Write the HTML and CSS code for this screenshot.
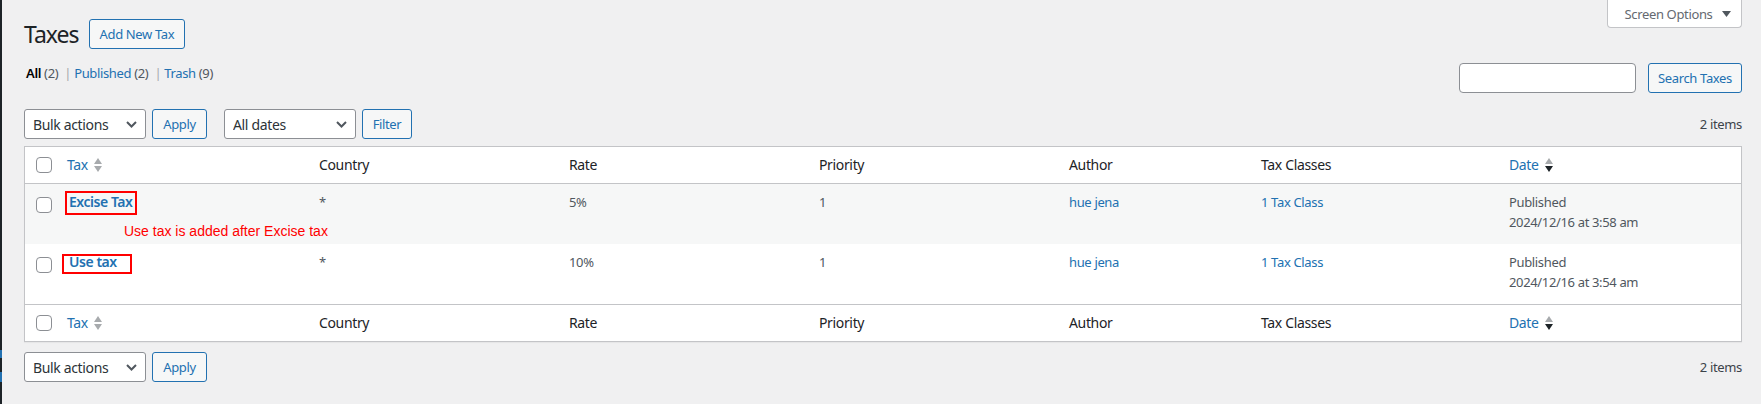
FILE: index.html
```html
<!DOCTYPE html>
<html lang="en">
<head>
  <meta charset="UTF-8" />
  <meta name="viewport" content="width=device-width, initial-scale=1.0"/>
  <title>Taxes</title>
  <link rel="stylesheet" href="styles.css">
</head>
<body>
  <div class="admin">
    <div class="menu-edge">
      <span class="edge-mark"></span>
      <span class="edge-mark second"></span>
    </div>

    <main class="content">
      <div class="screen-options">
        <button class="screen-btn">Screen Options
          <svg class="caret" width="9" height="6" viewBox="0 0 9 6"><path d="M0 0 L9 0 L4.5 6 Z" fill="#50575e"/></svg>
        </button>
      </div>

      <div class="title-row">
        <h1>Taxes</h1>
        <a class="page-action" href="#">Add New Tax</a>
      </div>

      <div class="filter-row">
        <ul class="subsubsub">
          <li><a class="current" href="#">All <span class="count">(2)</span></a> <span class="sep">|</span></li>
          <li><a href="#">Published <span class="count">(2)</span></a> <span class="sep">|</span></li>
          <li><a href="#">Trash <span class="count">(9)</span></a></li>
        </ul>
        <form class="search-box">
          <input type="search" class="search-input">
          <button type="button" class="btn search-btn">Search Taxes</button>
        </form>
      </div>

      <div class="tablenav">
        <div class="select-wrap bulk">
          <select><option>Bulk actions</option></select>
          <svg class="chevron" width="11" height="7" viewBox="0 0 11 7"><path d="M1 1 L5.5 5.5 L10 1" fill="none" stroke="#50575e" stroke-width="2"/></svg>
        </div>
        <button class="btn apply-btn">Apply</button>
        <div class="select-wrap dates">
          <select><option>All dates</option></select>
          <svg class="chevron" width="11" height="7" viewBox="0 0 11 7"><path d="M1 1 L5.5 5.5 L10 1" fill="none" stroke="#50575e" stroke-width="2"/></svg>
        </div>
        <button class="btn filter-btn">Filter</button>
        <span class="item-count">2 items</span>
      </div>

      <table class="tax-table">
        <colgroup>
          <col style="width: 32px">
          <col style="width: 252px">
          <col style="width: 250px">
          <col style="width: 250px">
          <col style="width: 250px">
          <col style="width: 192px">
          <col style="width: 248px">
          <col style="width: 242px">
        </colgroup>
        <thead>
          <tr>
            <th class="check"><span class="checkbox"></span></th>
            <th><a class="sort-link" href="#">Tax
              <svg class="sort-icon" width="8" height="16" viewBox="0 0 8 16"><path d="M0 7 L4 1 L8 7 Z" fill="#a7aaad"/><path d="M0 9 L4 15 L8 9 Z" fill="#a7aaad"/></svg></a></th>
            <th>Country</th>
            <th>Rate</th>
            <th>Priority</th>
            <th>Author</th>
            <th>Tax Classes</th>
            <th><a class="sort-link" href="#">Date
              <svg class="sort-icon" width="8" height="16" viewBox="0 0 8 16"><path d="M0 7 L4 1 L8 7 Z" fill="#a7aaad"/><path d="M0 9 L4 15 L8 9 Z" fill="#1d2327"/></svg></a></th>
          </tr>
        </thead>
        <tbody>
          <tr class="alt">
            <th class="check"><span class="checkbox"></span></th>
            <td class="title-cell">
              <a class="row-title" href="#">Excise Tax</a>
              <span class="mark mark-excise"></span>
              <span class="note">Use tax is added after Excise tax</span>
            </td>
            <td>*</td>
            <td>5%</td>
            <td>1</td>
            <td><a href="#">hue jena</a></td>
            <td><a href="#">1 Tax Class</a></td>
            <td>Published<br>2024/12/16 at 3:58 am</td>
          </tr>
          <tr>
            <th class="check"><span class="checkbox"></span></th>
            <td class="title-cell">
              <a class="row-title" href="#">Use tax</a>
              <span class="mark mark-use"></span>
            </td>
            <td>*</td>
            <td>10%</td>
            <td>1</td>
            <td><a href="#">hue jena</a></td>
            <td><a href="#">1 Tax Class</a></td>
            <td>Published<br>2024/12/16 at 3:54 am</td>
          </tr>
        </tbody>
        <tfoot>
          <tr>
            <th class="check"><span class="checkbox"></span></th>
            <th><a class="sort-link" href="#">Tax
              <svg class="sort-icon" width="8" height="16" viewBox="0 0 8 16"><path d="M0 7 L4 1 L8 7 Z" fill="#a7aaad"/><path d="M0 9 L4 15 L8 9 Z" fill="#a7aaad"/></svg></a></th>
            <th>Country</th>
            <th>Rate</th>
            <th>Priority</th>
            <th>Author</th>
            <th>Tax Classes</th>
            <th><a class="sort-link" href="#">Date
              <svg class="sort-icon" width="8" height="16" viewBox="0 0 8 16"><path d="M0 7 L4 1 L8 7 Z" fill="#a7aaad"/><path d="M0 9 L4 15 L8 9 Z" fill="#1d2327"/></svg></a></th>
          </tr>
        </tfoot>
      </table>

      <div class="tablenav bottom">
        <div class="select-wrap bulk">
          <select><option>Bulk actions</option></select>
          <svg class="chevron" width="11" height="7" viewBox="0 0 11 7"><path d="M1 1 L5.5 5.5 L10 1" fill="none" stroke="#50575e" stroke-width="2"/></svg>
        </div>
        <button class="btn apply-btn">Apply</button>
        <span class="item-count">2 items</span>
      </div>
    </main>
  </div>
</body>
</html>
```

FILE: styles.css
```css
body {
  margin: 0;
  background: #f0f0f1;
  color: #3c434a;
  font-family: "Noto Sans", "Open Sans", sans-serif;
  font-size: 13px;
  letter-spacing: -0.35px;
}
a {
  color: #2271b1;
  text-decoration: none;
}
.admin {
  display: flex;
  min-height: 404px;
}
.menu-edge {
  width: 2px;
  background: #1d2327;
  display: flex;
  flex-direction: column;
  padding-top: 350px;
}
.edge-mark {
  display: block;
  height: 8px;
  background: #2271b1;
}
.edge-mark.second {
  margin-top: 14px;
  height: 10px;
}
.content {
  flex: 1;
  padding: 0 19px 0 22px;
}

/* screen options tab */
.screen-options {
  float: right;
}
.screen-btn {
  height: 28px;
  width: 135px;
  border: 1px solid #c3c4c7;
  border-top: none;
  border-radius: 0 0 4px 4px;
  background: #fff;
  color: #646970;
  font-family: inherit;
  font-size: 13px;
  letter-spacing: -0.35px;
  padding: 0 0 0 6px;
  display: flex;
  align-items: center;
  justify-content: center;
  gap: 9px;
}

/* heading */
.title-row {
  display: flex;
  align-items: center;
  padding-top: 19px;
  height: 30px;
}
h1 {
  margin: 0;
  font-size: 23px;
  font-weight: 400;
  line-height: 30px;
  letter-spacing: -1px;
  color: #1d2327;
}
.page-action {
  margin-left: 10px;
  height: 30px;
  box-sizing: border-box;
  padding: 0 10px;
  border: 1px solid #2271b1;
  border-radius: 3px;
  background: #f6f7f7;
  line-height: 28px;
  font-size: 13px;
}

.filter-row {
  display: flex;
  justify-content: space-between;
  align-items: flex-start;
  margin-top: 14px;
}
.subsubsub {
  list-style: none;
  margin: 0;
  padding: 0 0 0 2px;
  display: flex;
  line-height: 20px;
}
.subsubsub li {
  white-space: pre;
}
.subsubsub .current {
  color: #000;
  font-weight: 600;
}
.subsubsub .count {
  color: #50575e;
  font-weight: 400;
}
.subsubsub .sep {
  color: #a7aaad;
  margin: 0 3px;
}
.search-box {
  display: flex;
  gap: 12px;
  margin: 0;
}
.search-input {
  width: 177px;
  height: 30px;
  box-sizing: border-box;
  border: 1px solid #8c8f94;
  border-radius: 4px;
  background: #fff;
}

.btn {
  height: 30px;
  box-sizing: border-box;
  border: 1px solid #2271b1;
  border-radius: 3px;
  background: #f6f7f7;
  color: #2271b1;
  font-family: inherit;
  font-size: 13px;
  letter-spacing: -0.35px;
  padding: 0 10px;
}
.search-btn {
  width: 94px;
  padding: 0;
}

.tablenav {
  display: flex;
  align-items: center;
  height: 30px;
  margin-top: 16px;
}
.tablenav.bottom {
  margin-top: 10px;
}
.select-wrap {
  position: relative;
}
.select-wrap select {
  appearance: none;
  height: 30px;
  border: 1px solid #8c8f94;
  border-radius: 3px;
  background: #fff;
  color: #2c3338;
  font-family: inherit;
  font-size: 14px;
  letter-spacing: -0.35px;
  padding: 0 24px 0 8px;
}
.select-wrap.bulk select {
  width: 122px;
}
.select-wrap.dates select {
  width: 132px;
  margin-left: 17px;
}
.chevron {
  position: absolute;
  right: 9px;
  top: 12px;
}
.apply-btn {
  width: 55px;
  padding: 0;
  margin-left: 6px;
}
.filter-btn {
  width: 50px;
  padding: 0;
  margin-left: 6px;
}
.item-count {
  margin-left: auto;
  color: #3c434a;
}

/* table */
.tax-table {
  width: 100%;
  margin-top: 7px;
  table-layout: fixed;
  border-collapse: separate;
  border-spacing: 0;
  border: 1px solid #c3c4c7;
  background: #fff;
  box-shadow: 0 1px 1px rgba(0, 0, 0, 0.04);
}
.tax-table thead th,
.tax-table tfoot th {
  text-align: left;
  font-weight: 400;
  font-size: 14px;
  color: #1d2327;
  line-height: 36px;
  padding: 0 10px;
  vertical-align: middle;
}
.tax-table thead th {
  border-bottom: 1px solid #c3c4c7;
}
.tax-table tfoot th {
  border-top: 1px solid #c3c4c7;
}
.tax-table th.check {
  padding: 0 0 0 11px;
}
.checkbox {
  display: block;
  width: 16px;
  height: 16px;
  box-sizing: border-box;
  border: 1px solid #8c8f94;
  border-radius: 4px;
  background: #fff;
}
.sort-link {
  display: inline-flex;
  align-items: center;
  gap: 6px;
}
.tax-table tbody td,
.tax-table tbody th {
  vertical-align: top;
  text-align: left;
  padding: 8px 10px 12px;
  line-height: 20px;
  color: #50575e;
}
.tax-table tbody th.check {
  padding: 13px 0 0 11px;
}
.tax-table tbody tr.alt td,
.tax-table tbody tr.alt th {
  background: #f6f7f7;
}
.title-cell {
  position: relative;
}
.row-title {
  font-size: 14px;
  font-weight: 600;
  letter-spacing: -0.45px;
  margin-left: 2px;
}

/* red annotations drawn over the screenshot */
.mark {
  position: absolute;
  box-sizing: border-box;
  border: 2px solid #f00;
}
.mark-excise {
  left: 8px;
  top: 7px;
  width: 72px;
  height: 24px;
}
.mark-use {
  left: 5px;
  top: 10px;
  width: 70px;
  height: 20px;
}
.note {
  position: absolute;
  left: 67px;
  top: 39px;
  line-height: 16px;
  white-space: nowrap;
  font-family: "Liberation Sans", Arial, sans-serif;
  font-size: 14px;
  letter-spacing: 0;
  color: #f00;
}
```
